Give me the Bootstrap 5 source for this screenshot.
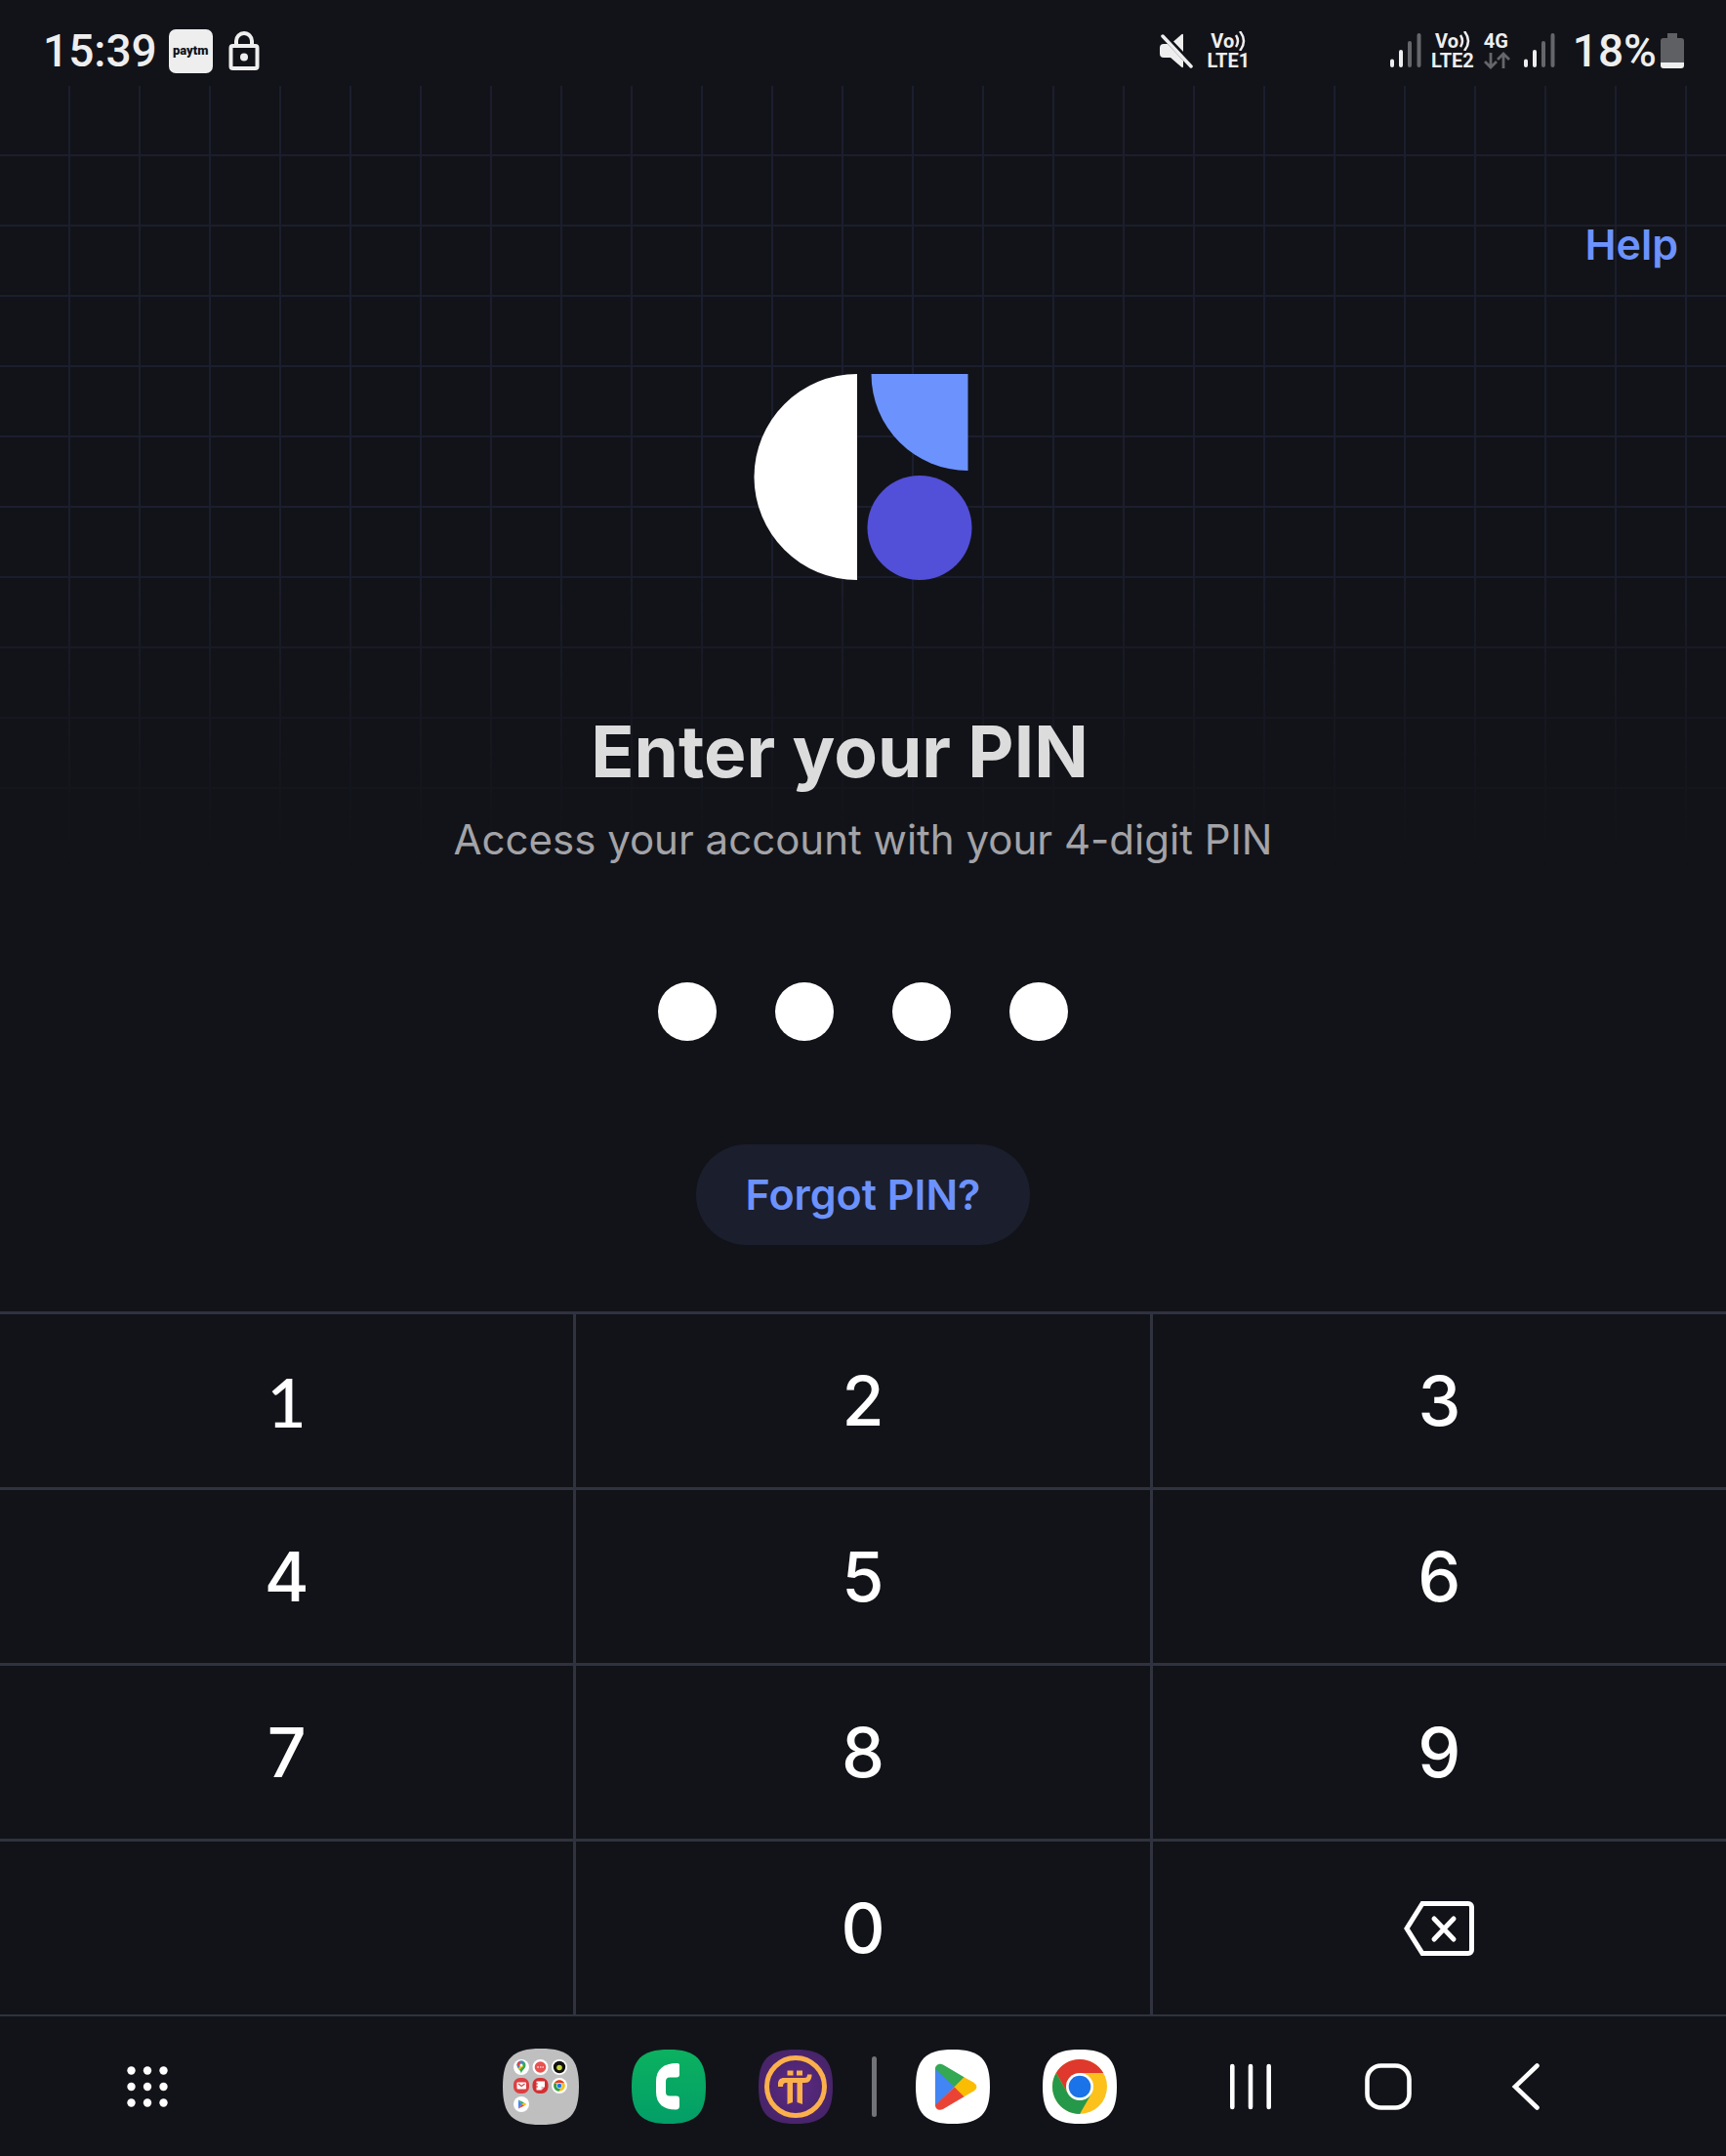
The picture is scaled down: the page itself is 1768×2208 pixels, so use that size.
<!DOCTYPE html>
<html lang="en">
<head>
<meta charset="utf-8">
<meta name="viewport" content="width=device-width, initial-scale=1">
<title>Enter your PIN</title>
<link href="https://cdn.jsdelivr.net/npm/bootstrap@5.3.0/dist/css/bootstrap.min.css" rel="stylesheet">
<style>
  body { background: #121318; color: #fff; font-family: Inter, "Open Sans", sans-serif; }
  svg { display: block; flex: none; }
  .app-link { color: #6c92fd; font-size: 43px; line-height: 48px; font-weight: 600; }

  /* status bar */
  .status-bar { height: 88px; padding: 16px 43px 0 44px; font-family: Roboto, sans-serif; color: #eee; }
  .status-big { font-size: 46px; line-height: 72px; font-weight: 500; }
  .status-tiny { font-size: 20px; line-height: 20px; font-weight: 700; }
  .status-left { gap: 12px; }
  .status-right { gap: 10px; }
  .sim-gap { margin-right: 134px; }
  .battery { gap: 4px; }
  .paytm-chip { width: 45px; height: 45px; border-radius: 7px; background: #eee; color: #121318; font-size: 13px; font-weight: 900; }

  /* hero with fading grid */
  .hero { position: relative; padding: 138px 49px 68px; }
  .hero::before {
    content: ""; position: absolute; inset: 0 0 auto 0; height: 800px; pointer-events: none;
    background:
      linear-gradient(90deg, transparent 70px, #1b1e2d 70px) 0 0 / 72px 72px,
      linear-gradient(transparent 70px, #1b1e2d 70px) 0 0 / 72px 72px;
    -webkit-mask-image: linear-gradient(#000 60%, transparent);
    mask-image: linear-gradient(#000 60%, transparent);
  }
  .hero > * { position: relative; }
  .brand { margin: 109px auto 136px; }
  .pin-title { font-size: 73px; line-height: 80px; font-weight: 700; color: #dcdcdd; padding-right: 48px; }
  .pin-sub { font-size: 42px; line-height: 48px; color: #a3a3a8; margin-top: 26px; }
  .pin-dots { gap: 60px; margin: 122px 0 106px; }
  .pin-dots span { width: 60px; height: 60px; border-radius: 50%; background: #fff; }
  .btn.forgot { background: #1b1e2c; border: 0; border-radius: 52px; padding: 27px 51px 28px; }

  /* keypad */
  .keypad { display: grid; grid-template-columns: repeat(3, 1fr); gap: 3px; padding: 3px 0 2px; background: #30323e; }
  .pad-key { height: 177px; border: 0; background: #121318; color: #fff; font: 500 70px/80px Inter, sans-serif; }
  .pad-key.footed { font-family: Lato, sans-serif; }

  /* bottom navigation */
  .taskbar { height: 143px; padding: 0 181px 0 130px; }
  .taskbar button { border: 0; background: none; padding: 0; }
  .dock { gap: 54px; }
  .dock-line { width: 5px; height: 62px; border-radius: 3px; background: #737377; margin: 0 -14px; }
  .sys-nav { gap: 93px; margin-left: 113px; }
</style>
<script src="https://cdn.jsdelivr.net/npm/bootstrap@5.3.0/dist/js/bootstrap.bundle.min.js"></script>
</head>
<body>
<div class="d-flex flex-column min-vh-100">

  <header class="status-bar d-flex justify-content-between align-items-start">
    <div class="status-left d-flex align-items-center">
      <span class="status-big">15:39</span>
      <span class="paytm-chip d-flex align-items-center justify-content-center">paytm</span>
      <svg class="ms-1" width="32" height="40" viewBox="0 0 32 40" fill="none" stroke="#eee" stroke-width="4"><rect x="2.500" y="15" width="27" height="23" rx="2"/><path d="M8 15V10a7.700 7.700 0 0 1 16 0v5"/><circle cx="16" cy="26.500" r="4" fill="#eee" stroke="none"/></svg>
    </div>
    <div class="status-right d-flex align-items-center">
      <svg class="me-1" width="34" height="36" viewBox="0 0 34 36" fill="#eee"><path d="M14 8.500 22 1.500Q24 0 24 2V19Z"/><path d="M0 15a4 4 0 0 1 4-4H8L24 28v6q0 2-2 .5L11 25H4a4 4 0 0 1-4-4Z"/><path d="M5 1 34 32" stroke="#121318" stroke-width="2.500"/><path d="M3 3 32 34" stroke="#eee" stroke-width="3.500" stroke-linecap="round"/></svg>
      <div class="status-tiny sim-gap">
        <div class="d-flex justify-content-center">Vo<svg width="12" height="20" viewBox="0 0 12 20" fill="none" stroke="#eee" stroke-width="2.500"><path d="M2 4q4 6 0 12M6 0q8 10 0 20"/></svg></div>
        <div>LTE1</div>
      </div>
      <svg width="32" height="36" viewBox="0 0 32 36" stroke="#eee" stroke-width="4" stroke-linecap="round"><path d="M2 28.500V33M11 19V33"/><path d="M20 10V33M29.500 2V33" stroke="#65666a"/></svg>
      <div class="status-tiny">
        <div class="d-flex justify-content-center">Vo<svg width="12" height="20" viewBox="0 0 12 20" fill="none" stroke="#eee" stroke-width="2.500"><path d="M2 4q4 6 0 12M6 0q8 10 0 20"/></svg></div>
        <div>LTE2</div>
      </div>
      <div class="status-tiny me-1">
        <div>4G</div>
        <svg width="27" height="20" viewBox="0 0 27 20" fill="none" stroke="#65666a" stroke-width="2.800"><path d="M7 2V17M1 11l6 6 6-6M20 18V3M14 9l6-6 6 6"/></svg>
      </div>
      <svg width="32" height="36" viewBox="0 0 32 36" stroke="#eee" stroke-width="4" stroke-linecap="round"><path d="M2 28.500V33M11 19V33"/><path d="M20 10V33M29.500 2V33" stroke="#65666a"/></svg>
      <div class="battery d-flex align-items-center ms-2">
        <span class="status-big">18%</span>
        <svg width="24" height="36" viewBox="0 0 24 36"><path d="M7 0h10v5h4a3 3 0 0 1 3 3V30H0V8a3 3 0 0 1 3-3h4Z" fill="#5f6064"/><path d="M0 30H24v3a3 3 0 0 1-3 3H3a3 3 0 0 1-3-3Z" fill="#eee"/></svg>
      </div>
    </div>
  </header>

  <main class="hero flex-grow-1 text-center">
    <div class="d-flex justify-content-end"><a href="#" class="app-link text-decoration-none">Help</a></div>
    <svg class="brand" width="224" height="211" viewBox="0 0 224 211" role="img" aria-label="Logo"><path d="M106 0V211A105.500 105.500 0 0 1 106 0Z" fill="#fff"/><path d="M120.500 0H219.500V99A99 99 0 0 1 120.500 0Z" fill="#6c92fd"/><circle cx="170" cy="157.500" r="53.500" fill="#524fd8"/></svg>
    <h1 class="pin-title mb-0">Enter your PIN</h1>
    <p class="pin-sub mb-0">Access your account with your 4-digit PIN</p>
    <div class="pin-dots d-flex justify-content-center" role="img" aria-label="4 digits entered"><span></span><span></span><span></span><span></span></div>
    <button type="button" class="btn forgot app-link d-block mx-auto">Forgot PIN?</button>
  </main>

  <section class="keypad" aria-label="Keypad">
    <button type="button" class="pad-key footed">1</button><button type="button" class="pad-key">2</button><button type="button" class="pad-key">3</button>
    <button type="button" class="pad-key">4</button><button type="button" class="pad-key">5</button><button type="button" class="pad-key">6</button>
    <button type="button" class="pad-key">7</button><button type="button" class="pad-key">8</button><button type="button" class="pad-key">9</button>
    <div class="pad-key"></div><button type="button" class="pad-key">0</button>
    <button type="button" class="pad-key" aria-label="Delete"><svg class="mx-auto" width="72" height="56" viewBox="0 0 72 56" fill="none" stroke="#fff" stroke-width="5"><path d="M19 2.500H66a3.500 3.500 0 0 1 3.500 3.500V50a3.500 3.500 0 0 1-3.500 3.500H19L3 28Z"/><path d="M31 18 51 39M51 18 31 39" stroke-linecap="round"/></svg></button>
  </section>

  <nav class="taskbar d-flex align-items-center justify-content-between" aria-label="Taskbar">
    <button type="button" aria-label="All apps"><svg width="42" height="42" viewBox="0 0 42 42" fill="#fff"><circle cx="4.500" cy="4.500" r="4.200"/><circle cx="21" cy="4.500" r="4.200"/><circle cx="37.500" cy="4.500" r="4.200"/><circle cx="4.500" cy="21" r="4.200"/><circle cx="21" cy="21" r="4.200"/><circle cx="37.500" cy="21" r="4.200"/><circle cx="4.500" cy="37.500" r="4.200"/><circle cx="21" cy="37.500" r="4.200"/><circle cx="37.500" cy="37.500" r="4.200"/></svg></button>
    <div class="d-flex align-items-center">
      <div class="dock d-flex align-items-center">
        <button type="button" aria-label="Folder"><svg width="78" height="78" viewBox="0 0 78 78"><path d="M39 0C68 0 78 10 78 39S68 78 39 78 0 68 0 39 10 0 39 0Z" fill="#bfbfbf"/>
          <g fill="#fff"><circle cx="19" cy="19" r="8"/><circle cx="38.500" cy="19" r="8"/><circle cx="58" cy="19" r="8"/><circle cx="58" cy="38" r="8"/><circle cx="19" cy="57" r="8"/></g>
          <path d="M19 26c0-4-4.500-5-4.500-9a4.500 4.500 0 0 1 9 0c0 4-4.500 5-4.500 9Z" fill="#34a853"/><path d="M14.500 17a4.500 4.500 0 0 1 7-3.700L16 20Z" fill="#4285f4"/><path d="m16 20 3-3.500 2 1.500-4 4Z" fill="#fbbc04"/><path d="M14.600 16a5 5 0 0 1 2-2.800l2 1.500-3 4Z" fill="#ea4335"/><circle cx="19" cy="17" r="1.500" fill="#fff"/>
          <circle cx="38.500" cy="19" r="5.800" fill="#e8524f"/><path d="M35 19h2m1 0h1.500m1 0h1.500" stroke="#fff" stroke-width="1.200"/>
          <circle cx="58" cy="19" r="6.200" fill="#111"/><circle cx="58" cy="19.500" r="2.800" fill="#c9d63a"/>
          <rect x="11" y="30" width="16" height="16" rx="6.500" fill="#dd3f42"/><rect x="14.500" y="34.500" width="9.500" height="7" rx="1" fill="#fff"/><path d="m16 36 3.200 2.500L22.500 36" fill="none" stroke="#dd3f42" stroke-width="1.200"/>
          <rect x="30.500" y="30" width="16" height="16" rx="6.500" fill="#d32f31"/><path d="M34.500 33.500H43V39L39.500 42.500H34.500Z" fill="#fff"/><path d="M39.500 42.500V39H43Z" fill="#f0b4b4"/><path d="M34 36h2m-2 3h2" stroke="#d32f31"/>
          <circle cx="58" cy="38" r="5.800" fill="#fbc116"/><path d="M53 35a5.800 5.800 0 0 1 10 0Z" fill="#e33b2e"/><path d="M53 35a5.800 5.800 0 0 0 4.500 8.800L60 39Z" fill="#2da04a"/><circle cx="58" cy="38" r="2.700" fill="#1a73e8" stroke="#fff" stroke-width=".7"/>
          <path d="M16 52.500v9l3.500-4.500Z" fill="#4285f4"/><path d="m16 52.500 6 3-2.500 1.500Z" fill="#34a853"/><path d="m22 55.500 2.500 1.500-2.500 1.500-2.500-1.500Z" fill="#fbbc04"/><path d="m16 61.500 6-3-2.500-1.500Z" fill="#ea4335"/></svg></button>
        <button type="button" aria-label="Phone"><svg width="76" height="76" viewBox="0 0 76 76"><defs><linearGradient id="gPhone" x2="0" y2="1"><stop stop-color="#0bb15f"/><stop offset="1" stop-color="#039e68"/></linearGradient></defs><path d="M38 0C66 0 76 10 76 38S66 76 38 76 0 66 0 38 10 0 38 0Z" fill="url(#gPhone)"/><path d="M49 16c0-1.500-1-2-3-2C33 14 25 20 25 33v10c0 13 8 18.500 20 18.500 3 0 4-1.500 4-4V51c0-2.500-1-3.500-3-3.500h-7c-3 0-4-1.500-4-4V33c0-3 1-4.500 4-4.500h7c2 0 3-1 3-3Z" fill="#fff"/></svg></button>
        <button type="button" aria-label="Pi"><svg width="76" height="76" viewBox="0 0 76 76"><defs><radialGradient id="gPi"><stop stop-color="#5d2a86"/><stop offset="1" stop-color="#48246a"/></radialGradient></defs><path d="M38 0C66 0 76 10 76 38S66 76 38 76 0 66 0 38 10 0 38 0Z" fill="url(#gPi)"/><circle cx="38" cy="38" r="29.500" fill="none" stroke="#fcb04c" stroke-width="5"/><g fill="#fcb04c"><path d="M29.500 21.500h6v5h-6ZM39 21.500h6v5h-6ZM20 38v-3c0-4 2.500-6 6-6H47c2 0 3-1 3-3.500h4.500C54.500 31 52 34 48 34H28c-2 0-3 1-3 4ZM29.500 33h5.500V54l-5.500 2ZM39.500 33h5.500V56l-5.500-2Z"/></g></svg></button>
        <div class="dock-line"></div>
        <button type="button" aria-label="Play Store"><svg width="76" height="76" viewBox="0 0 76 76"><path d="M38 0C66 0 76 10 76 38S66 76 38 76 0 66 0 38 10 0 38 0Z" fill="#fff"/><path d="M20 18V58L40 38Z" fill="#4285f4"/><path d="M20 20c0-4 4-6.500 8-4.500L50 28.500 40 38.500Z" fill="#34a853"/><path d="M20 57c0 4 4 6 8 4L50 48 40 38Z" fill="#ea4335"/><path d="M49.500 28.300 59 33.500c4.500 3 4.500 6.500 0 9.300L49.500 48.200 39.500 38.300Z" fill="#fbbc04"/></svg></button>
        <button type="button" aria-label="Chrome"><svg width="76" height="76" viewBox="0 0 76 76"><path d="M38 0C66 0 76 10 76 38S66 76 38 76 0 66 0 38 10 0 38 0Z" fill="#fff"/><circle cx="38" cy="38" r="28" fill="#fcc21b"/><path d="M13.750 24A28 28 0 0 1 62.250 24H38L25.900 45Z" fill="#df382c"/><path d="M13.750 24A28 28 0 0 0 38 66L50.100 45 38 38 25.900 45Z" fill="#26984a"/><circle cx="38" cy="38" r="14" fill="#fff"/><circle cx="38" cy="38" r="11.300" fill="#1a73e8"/></svg></button>
      </div>
      <div class="sys-nav d-flex align-items-center">
        <button type="button" aria-label="Recents"><svg width="48" height="48" viewBox="0 0 48 48" stroke="#fff" stroke-width="4.600" stroke-linecap="round"><path d="M5.300 3V45M24 3V45M42.700 3V45"/></svg></button>
        <button type="button" aria-label="Home"><svg width="48" height="48" viewBox="0 0 48 48" fill="none" stroke="#fff" stroke-width="4.600"><rect x="2.500" y="2.500" width="43" height="43" rx="14"/></svg></button>
        <button type="button" aria-label="Back"><svg width="48" height="48" viewBox="0 0 48 48" fill="none" stroke="#fff" stroke-width="4.600" stroke-linecap="round"><path d="M35.500 2.500 13 24 35.500 45.500"/></svg></button>
      </div>
    </div>
  </nav>
</div>
</body>
</html>
